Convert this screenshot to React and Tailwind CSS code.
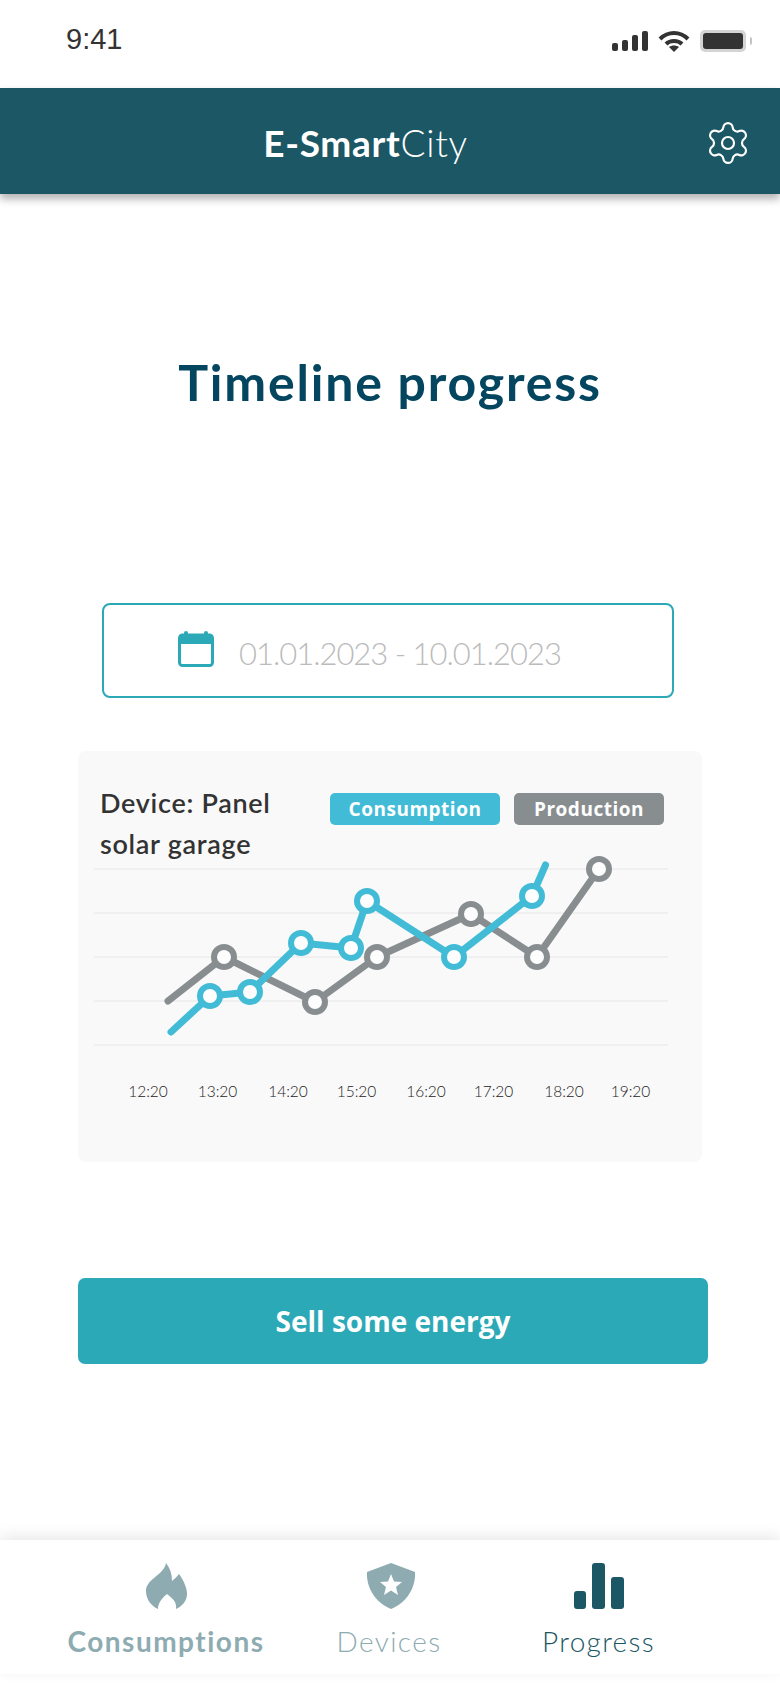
import React from "react";
import { Settings } from "lucide-react";

const gridLines = [118, 162, 206, 250, 294];
const timeLabels = [
    ["12:20", 70], ["13:20", 139.5], ["14:20", 210], ["15:20", 278.5],
    ["16:20", 348], ["17:20", 415.5], ["18:20", 486], ["19:20", 552.5],
];
// chart coords are relative to the card (78, 750)
const grayPoints = [[146, 206], [237, 251], [299, 206], [393, 163], [459, 206], [521, 118]];
const bluePoints = [[132, 245], [172, 241], [223, 192], [273, 197], [289, 150], [376, 206], [454, 145]];
const grayLine = "90,250 146,206 237,251 299,206 393,163 459,206 521,118";
const blueLine = "93,281 132,245 172,241 223,192 273,197 289,150 376,206 454,145 467.5,114";

const Dots = ({ points, color }) =>
    points.map(([x, y]) => (
        <circle key={x} cx={x} cy={y} r="10" fill="#fdfdfd" stroke={color} strokeWidth="6" />
    ));

const App = () => {
    return (
        <div className="w-[780px] h-[1688px] bg-white flex flex-col overflow-hidden font-['Lato',sans-serif]">
            {/* Status bar */}
            <div className="h-[88px] flex items-center justify-between pl-[66px] pr-[28px] pb-[6px]">
                <span className="font-['Liberation_Sans',sans-serif] text-[29px] text-[#333] mb-[3px]">9:41</span>
                <div className="flex items-center gap-[10px]">
                    <svg width="36" height="20" viewBox="0 0 36 20" fill="#333">
                        <rect x="0" y="12" width="6" height="8" rx="2" />
                        <rect x="10" y="9" width="6" height="11" rx="2" />
                        <rect x="20" y="4" width="6" height="16" rx="2" />
                        <rect x="30" y="0" width="6" height="20" rx="2" />
                    </svg>
                    <svg width="32" height="21" viewBox="0 0 32 21" fill="none" stroke="#333" strokeWidth="4">
                        <path d="M2 8 C10 0 22 0 30 8" />
                        <path d="M8 13 C12 9 20 9 24 13" />
                        <path d="M16 21 L11 16 C14 14 18 14 21 16 Z" fill="#333" stroke="none" />
                    </svg>
                    <div className="flex items-center">
                        <div className="w-[46px] h-[22px] rounded-[5px] bg-[#d4d4d4] p-[3px]">
                            <div className="w-full h-full rounded-[3px] bg-[#333]" />
                        </div>
                        <div className="ml-[4px] w-[2px] h-[8px] bg-[#c4c4c4] rounded-r-sm" />
                    </div>
                </div>
            </div>

            {/* Header */}
            <header className="h-[106px] bg-[#1b5764] shadow-[0_5px_8px_rgba(0,0,0,0.3)] flex items-center relative z-10 shrink-0">
                <div className="w-full text-center text-white text-[37px] leading-none tracking-[0.7px] pr-[49px] pt-[3px]">
                    <span className="font-bold">E-Smart</span>
                    <span className="font-light">City</span>
                </div>
                <Settings className="absolute right-[28px] top-[31px] w-[48px] h-[48px] text-white" strokeWidth={1.1} />
            </header>

            {/* Main */}
            <main className="flex-1 flex flex-col">
                <h1 className="mt-[158px] text-center text-[50px] leading-[60px] font-bold tracking-[1.8px] text-[#04465f]">
                    Timeline progress
                </h1>

                <div className="mt-[191px] ml-[102px] w-[572px] h-[95px] border-2 border-[#2ca9b7] rounded-[8px] flex items-center pl-[74px] gap-[25px]">
                    <svg width="36" height="36" viewBox="0 0 36 36" className="mb-[3px]">
                        <rect x="1.5" y="4" width="33" height="30.5" rx="3" fill="none" stroke="#2ca9b7" strokeWidth="3" />
                        <rect x="1" y="4" width="34" height="9" rx="2" fill="#2ca9b7" />
                        <rect x="6" y="0" width="4" height="6" rx="2" fill="#2ca9b7" />
                        <rect x="26" y="0" width="4" height="6" rx="2" fill="#2ca9b7" />
                    </svg>
                    <span className="text-[31px] font-light text-[#bbbbbb] leading-none tracking-[-1px] mt-[6px]">01.01.2023 - 10.01.2023</span>
                </div>

                <section className="mt-[53px] ml-[78px] w-[624px] h-[411px] bg-[#f9f9f9] rounded-[8px] relative">
                    <div className="flex justify-between pt-[31px] pl-[22px] pr-[38px]">
                        <p className="w-[200px] text-[27px] leading-[41px] font-semibold text-[#333] tracking-[0.7px]">
                            Device: Panel solar garage
                        </p>
                        <div className="flex gap-[14px] mt-[11px] font-['Open_Sans',sans-serif] font-bold text-[19px] text-white">
                            <span className="w-[170px] h-[32px] rounded-[5px] bg-[#42bcd6] flex items-center justify-center tracking-[0.5px]">Consumption</span>
                            <span className="w-[150px] h-[32px] rounded-[5px] bg-[#888e90] flex items-center justify-center tracking-[0.5px]">Production</span>
                        </div>
                    </div>
                    <svg className="absolute left-0 top-0" width="624" height="411" viewBox="0 0 624 411">
                        {gridLines.map((y) => (
                            <line key={y} x1="16" x2="590" y1={y} y2={y} stroke="#e6e6e6" strokeWidth="1" />
                        ))}
                        <polyline points={grayLine} fill="none" stroke="#888e90" strokeWidth="7" strokeLinecap="round" strokeLinejoin="round" />
                        <Dots points={grayPoints} color="#888e90" />
                        <polyline points={blueLine} fill="none" stroke="#42bcd6" strokeWidth="7" strokeLinecap="round" strokeLinejoin="round" />
                        <Dots points={bluePoints} color="#42bcd6" />
                        {timeLabels.map(([label, x]) => (
                            <text key={label} x={x} y="346" textAnchor="middle" fontSize="15.5" fontWeight="300" fill="#222">{label}</text>
                        ))}
                    </svg>
                </section>

                <button className="mt-[116px] ml-[78px] w-[630px] h-[86px] rounded-[7px] bg-[#2ca9b7] text-white text-[28px] font-bold font-['Open_Sans',sans-serif]">
                    Sell some energy
                </button>
            </main>

            {/* Bottom nav */}
            <nav className="h-[134px] mb-[14px] bg-white shadow-[0_-4px_14px_rgba(0,0,0,0.09)] relative shrink-0 flex">
                <div className="ml-[68px] w-[196px] flex flex-col items-center pt-[23px]">
                    <svg width="42" height="46" viewBox="0 0 42 46" fill="#8dabb1" className="ml-[2px]">
                        <path d="M20 0 C24 5 26 11 26 18 C28 16 31 14 33 11 C38 18 41 25 41 31 C41 37 37 43 30 46 C31 39 27 36 21 31 C16 35 12 40 12 46 C5 43 0 36 0 28 C0 16 18 12 20 0 Z" />
                    </svg>
                    <span className="mt-[10px] text-[28px] leading-[44px] font-bold text-[#8dabb1] tracking-[1.5px]">Consumptions</span>
                </div>
                <div className="ml-[74px] w-[102px] flex flex-col items-center pt-[23px]">
                    <svg width="50" height="46" viewBox="0 0 50 46" className="ml-[3px]">
                        <path d="M25 0 L49 9 C50 25 40 40 25 46 C10 40 0 25 1 9 Z" fill="#8dabb1" />
                        <path d="M25 11 L28 18.5 L36 19 L30 24 L32 32 L25 27.6 L18 32 L20 24 L14 19 L22 18.5 Z" fill="#fff" />
                    </svg>
                    <span className="mt-[10px] text-[28px] leading-[44px] font-light text-[#8dabb1] tracking-[1.4px]">Devices</span>
                </div>
                <div className="ml-[101px] w-[115px] flex flex-col items-center pt-[23px]">
                    <svg width="50" height="46" viewBox="0 0 50 46" fill="#1b5764" className="ml-[1px]">
                        <rect x="0" y="28" width="12" height="18" rx="3" />
                        <rect x="18" y="0" width="13" height="46" rx="3" />
                        <rect x="37" y="14" width="13" height="32" rx="3" />
                    </svg>
                    <span className="mt-[10px] text-[28px] leading-[44px] font-light text-[#1b5764] tracking-[1.3px]">Progress</span>
                </div>
            </nav>
        </div>
    );
};

export default App;
